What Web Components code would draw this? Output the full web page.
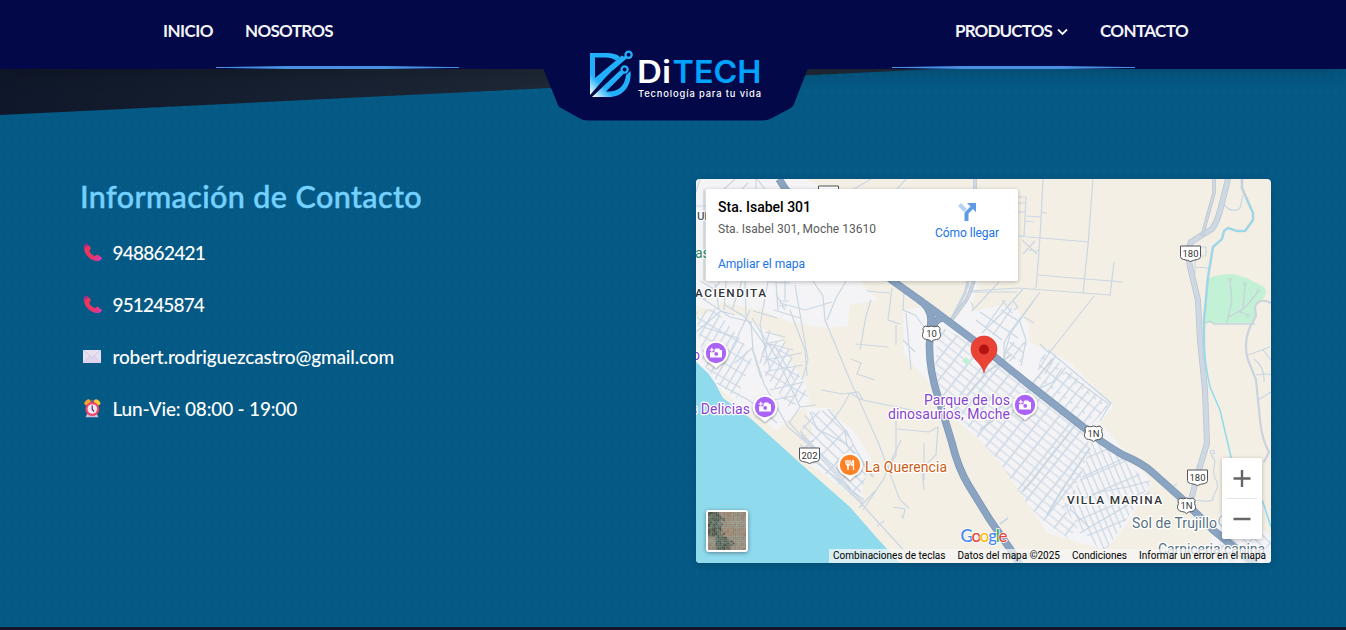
<!DOCTYPE html>
<html lang="es">
<head>
<meta charset="utf-8">
<title>DiTech</title>
<style>
html,body{margin:0;height:630px;overflow:hidden;background:#0f172a}
</style>
</head>
<body>
<ditech-page></ditech-page>
<script>
const define = (name, html, ready) => customElements.define(name, class extends HTMLElement {
  constructor(){ super(); this.attachShadow({mode:'open'}).innerHTML = html; }
  connectedCallback(){ if (ready) ready(this, this.shadowRoot); }
});

/* Text that spreads its tracking evenly to fill the width given in "w". */
define('fit-label', `<style>:host{display:block;white-space:nowrap;width:max-content}span{display:inline-block}</style><span><slot></slot></span>`,
(el, root) => {
  const s = root.querySelector('span'), n = el.textContent.length, w = +el.getAttribute('w');
  s.style.letterSpacing = '0';
  const d = (w - s.getBoundingClientRect().width) / n;
  s.style.letterSpacing = d + 'px';
});

define('nav-underline', `<style>
:host{display:block;width:243px;height:3px;background:
linear-gradient(#4a90e2,#4a90e2) 0 1px/100% 1px no-repeat,
linear-gradient(90deg,transparent 4%,#4a90e2 29%,#4a90e2 70%,transparent 96%)}
</style>`);

define('brand-logo', `<style>:host{display:block;width:265px;height:52px}svg{display:block;overflow:visible}</style>
<svg width="265" height="121" viewBox="543 0 265 121">
<defs><linearGradient id="g" x1="590" y1="97" x2="604" y2="83" gradientUnits="userSpaceOnUse"><stop offset=".1" stop-color="#fff"/><stop offset=".85" stop-color="#22b0fc"/></linearGradient></defs>
<path d="M543 68L558 105Q559 107 561 108L579 118Q583 120.500 588 120.500H762Q767 120.500 771 118.500L790 108.500Q793 107 794 104L808 68Z" fill="#030848"/>
<path d="M590 53H607C612 53 617 54 620 57L616 60.500C613 58.500 610 57.500 606 57.500H595V82L590 90Z" fill="url(#g)"/>
<path d="M590 95V84L595 78L622 55.500L625 57.500L605 78Z" fill="url(#g)"/>
<path d="M592 97L620 70.500L624.500 73L606 91.500H609C618 91.500 625 86 626 75L630.500 71C632 87 622 97 609 97Z" fill="url(#g)"/>
<path d="M612 69L626 57" stroke="#22b0fc" stroke-width="3"/>
<path d="M612 74L622 66" stroke="#030848" stroke-width="1.300"/>
<circle cx="628.600" cy="54.800" r="3.100" fill="#030848" stroke="#22b0fc" stroke-width="2.200"/>
<circle cx="624.600" cy="69.500" r="3.100" fill="#030848" stroke="#22b0fc" stroke-width="2.200"/>
<g fill="#fff"><text x="637" y="82.500" font-family="Inter,sans-serif" font-size="31" font-weight="600" textLength="34" lengthAdjust="spacingAndGlyphs">Di</text><text x="672.500" y="82.500" font-family="Inter,sans-serif" font-size="31" font-weight="600" fill="#00a2ff" textLength="89" lengthAdjust="spacingAndGlyphs">TECH</text>
<text x="638" y="97" font-family="Inter,sans-serif" font-size="9.300" font-weight="500" textLength="123">Tecnología para tu vida</text></g>
</svg>`);

define('site-header', `<style>
:host{display:block;position:relative;z-index:2;height:69px;background:#030848;box-shadow:0 8px 15px -3px rgba(0,0,0,.17);color:#f3f4f8;font:700 17px/24px Lato,sans-serif}
.bar{display:grid;grid-template-columns:543px 265px 1fr;height:69px}
.side{display:grid;grid-template-rows:66px 3px}
nav{display:flex;padding:19px 0 0 163px;gap:32px}
.r nav{padding-left:147px}
.drop{display:flex;gap:5px;align-items:center;height:24px}
svg{margin-top:2px}
nav-underline{margin-left:216px}.r nav-underline{margin-left:84px}
</style>
<div class="bar">
<div class="side"><nav><fit-label w="50">INICIO</fit-label><fit-label w="88">NOSOTROS</fit-label></nav><nav-underline></nav-underline></div>
<brand-logo></brand-logo>
<div class="side r"><nav><span class="drop"><fit-label w="97">PRODUCTOS</fit-label><svg width="11" height="8" viewBox="0 0 11 8"><path d="M1 1.500L5.500 6L10 1.500" fill="none" stroke="#f3f4f8" stroke-width="1.800"/></svg></span><fit-label w="88">CONTACTO</fit-label></nav><nav-underline></nav-underline></div>
</div>`);

const ICONS = {
phone:`<defs><linearGradient id="p" x2="1" y2="1"><stop stop-color="#9c2b88"/><stop offset=".25" stop-color="#f0365a"/><stop offset=".6" stop-color="#ec3466"/><stop offset="1" stop-color="#d03ab0"/></linearGradient></defs><path d="M1 2L4 0.500L8 5L6.300 8Q8 12 12 13L14.500 11.500L19 15Q18 18 15 18Q8 18 3.500 12Q0 7 1 2Z" fill="url(#p)"/><path d="M1 2L4 .5L5 1.500L2.500 4.500Z" fill="#9a2b86"/><path d="M14 12.500L19 15L17.500 17Z" fill="#db39b7"/>`,
mail:`<path d="M0 3H18V16H0Z" fill="#e8e1f2"/><path d="M0 16L7.500 9.500H10.500L18 16Z" fill="#e0d3ed"/><path d="M0 3.300L9 10.500L18 3.300M0 15.500L7 9M18 15.500L11 9" fill="none" stroke="#c6b8d8" stroke-width=".6"/>`,
clock:`<path d="M4 15L2.500 18.300H15.500L14 15Z" fill="#cabbdc"/><ellipse cx="4.500" cy="3.300" rx="3.500" ry="2.300" transform="rotate(-38 4.500 3.300)" fill="#f9a52c"/><ellipse cx="14.200" cy="3.300" rx="3.500" ry="2.300" transform="rotate(38 14.200 3.300)" fill="#ffcf33"/><path d="M8 1H11V4H8Z" fill="#7c5a87"/><circle cx="9.300" cy="10" r="7" fill="#f24464"/><circle cx="9.300" cy="10" r="4.800" fill="#f0e6f6"/><path d="M9.200 6.500V10.300L11 12.500" fill="none" stroke="#44314f" stroke-width="1.200"/>`};
define('contact-row', `<style>:host{display:flex;height:28px;margin-bottom:24px;align-items:center;font:500 19px/28px Lato,sans-serif;color:#fff}
i{display:block;width:19px;height:19px;margin:-2px 10.500px 0 3px}svg{display:block}</style><i></i><slot></slot>`,
(el, root) => root.querySelector('i').innerHTML = `<svg width="19" height="19" viewBox="0 0 19 19">${ICONS[el.getAttribute('icon')]}</svg>`);

define('contact-info', `<style>:host{display:block;width:575px}
h2{margin:-1px 0 25px;font:500 30.500px/36px Lato,sans-serif;color:#74d1ff;-webkit-text-stroke:.5px #74d1ff}</style>
<h2><fit-label w="342">Información de Contacto</fit-label></h2>
<contact-row icon="phone"><fit-label w="92.500">948862421</fit-label></contact-row>
<contact-row icon="phone"><fit-label w="91.500">951245874</fit-label></contact-row>
<contact-row icon="mail"><fit-label w="281.500">robert.rodriguezcastro@gmail.com</fit-label></contact-row>
<contact-row icon="clock"><fit-label w="184.500">Lun-Vie: 08:00 - 19:00</fit-label></contact-row>`);

const pinBody = `<path d="M0 -12.300A12.300 12.300 0 0 1 9 8.300Q4 11 0 15Q-4 11-9 8.300A12.300 12.300 0 0 1 0 -12.300Z" fill="#fff" filter="url(#sh)"/>`;
const cameraPin = (x, y) => `<g transform="translate(${x} ${y})">${pinBody}<circle r="10.200" fill="#aa62f7"/><path d="M-1.500-3L-.5-4.500H3.200L4.200-3H6V4.500H-6V-.8H-1.500Z" fill="#fff"/><circle cx=".2" cy=".9" r="1.900" fill="#aa62f7"/><path d="M-4.200-5.200V-1.200M-6.200-3.200H-2.200" stroke="#fff" stroke-width="1.200"/></g>`;
const shield = (x, y, t) => `<g transform="translate(${x} ${y})"><path d="M-10-7.500H10V3Q10 5.500 7 6Q3 6.500 0 8Q-3 6.500-7 6Q-10 5.500-10 3Z" fill="#fff" stroke="#505357"/><text y="3.500" text-anchor="middle" font-size="9.500" fill="#333">${t}</text></g>`;
const usShield = (x, y, t) => `<g transform="translate(${x} ${y})"><path d="M-6.500-7.500Q-3-6 0-7.500Q3-6 6.500-7.500L8.500-5Q7.500-2 9 1Q9.500 5 5 6Q2 6 0 8Q-2 6-5 6Q-9.500 5-9 1Q-7.500-2-8.500-5Z" fill="#fff" stroke="#505357"/><text y="3.500" text-anchor="middle" font-size="9.500" fill="#333">${t}</text></g>`;
const HIGHWAY = 'M779 179L786 190L840 240L893 281L932 309L980 345L1027 383L1083 427Q1102 443 1123 455Q1142 463 1152 472L1180 497L1213 530L1256 565M918 299Q931 307 931 320L929.500 345Q929 369 938 397L952 443Q958 468 969 486L990 520L1013 553L1020 565M944 318Q933 318 931 334';
const ROAD180 = 'M1228 179L1222 203Q1218 221 1212 229L1202 235L1191 242Q1187 250 1190 267L1198 300L1200 340L1205 390L1207 443L1198 473L1191 500';

define('city-map', `<style>:host{display:block}svg{display:block}
.road{fill:none;stroke:#cad7e3;stroke-width:1.200}.hw{fill:none;stroke:#7c98b8;stroke-width:7.500}.hi{fill:none;stroke:#8aa4c1;stroke-width:6}.w{fill:none;stroke:#b8c3cf;stroke-width:6}.wi{fill:none;stroke:#cdd8e3;stroke-width:4.600}
.lb{paint-order:stroke;stroke:#fff;stroke-width:2.500px;stroke-linejoin:round}</style>
<svg width="575" height="384" viewBox="696 179 575 384" font-family="Roboto,sans-serif">
<defs>
<filter id="sh" x="-30%" y="-30%" width="160%" height="170%"><feDropShadow dx="0" dy="1" stdDeviation="1" flood-opacity=".45"/></filter>
<pattern id="moche" width="14" height="26" patternUnits="userSpaceOnUse" patternTransform="translate(935 320) rotate(-52)"><path d="M0 1H14M0 14H14" stroke="#cbd7e3" stroke-width="1.700"/><path d="M1 0V26M8 0V26" stroke="#d0dbe6" stroke-width="1.200"/></pattern>
<pattern id="norte" width="18" height="8" patternUnits="userSpaceOnUse" patternTransform="translate(1048 350) rotate(-52)"><path d="M0 .6H18M.6 0V8M9 0V4" stroke="#cbd7e3" stroke-width="1.200"/></pattern>
<pattern id="sur" width="18" height="6" patternUnits="userSpaceOnUse" patternTransform="translate(1080 460) rotate(67)"><path d="M0 .6H18M.6 0V6" stroke="#ccd8e4" stroke-width="1.200"/></pattern>
<pattern id="coast" width="13" height="7" patternUnits="userSpaceOnUse" patternTransform="translate(700 320) rotate(-60)"><path d="M0 .6H13M.6 0V7" stroke="#cbd7e4" stroke-width="1.100"/></pattern>
<pattern id="quer" width="16" height="8" patternUnits="userSpaceOnUse" patternTransform="translate(810 420) rotate(44)"><path d="M0 .6H16M.6 0V8" stroke="#cbd7e4" stroke-width="1.200"/></pattern>
</defs>
<path d="M696 179H1271V563H696Z" fill="#f4efe4"/>
<g fill="#f4f3f5">
<path d="M696 179H805L815 184L835 189V281H860L878 300L850 305L848 326L825 328L790 322L760 310L740 306L722 302L712 310L696 306Z"/>
<path d="M696 318L720 308L745 318L783 340L790 360L805 380L810 403L790 418L777 430L752 415L723 392L696 362Z"/>
<path d="M805 407L830 408L840 420L853 430L872 460L863 480L862 503L798 455L813 433Z"/>
<path d="M903 310L925 306L952 322L962 312L974 281H980L970 312L1000 305L1016 308L1029 325V342L1048 350L1070 362L1113 407L1100 423L1127 453L1152 483L1130 520L1107 549L1097 548L1047 533L1000 463L980 440L950 415L935 390L925 378L904 355Z"/>
<path d="M1225 500L1271 536V563H1225L1210 540Z"/>
</g>
<path d="M696 362L708 373L715 383L723 398L750 418L800 463L850 507L877 538L900 563H696Z" fill="#90daee"/>
<path d="M1208 278Q1220 274 1233 274L1247 278L1264 287Q1268 293 1263 299Q1254 303 1255 309V317L1250 323H1204Z" fill="#c3f1d5"/>
<path d="M938 325L983 349L1027 386L1083 430L1090 445L1080 480L1060 505L1045 522L1030 508L1000 463L967 425L942 400L935 370Z" fill="url(#moche)"/>
<path d="M1045 522L1062 505L1078 528L1068 538Z" fill="url(#moche)"/>
<path d="M966 357L971 361L967 365L962 361Z" fill="#c3f1d5"/>
<path d="M1043 353L1062 364L1109 406L1088 428L1032 384Z" fill="url(#norte)"/>
<path d="M1005 342L1029 342L1020 362L1003 361Z" fill="url(#norte)"/>
<path d="M1093 436L1122 457L1145 480L1150 484L1107 549L1098 548L1062 507L1080 480Z" fill="url(#sur)"/>
<path d="M696 312L714 308L743 342L752 360L737 398L720 385L703 364Z" fill="url(#coast)"/>
<path d="M761 345L785 340L808 396L790 408L765 375Z" fill="url(#coast)"/>
<path d="M805 412L833 410L850 438L868 471L858 501L799 452Z" fill="url(#quer)"/>
<path d="M1228 503L1271 536V563H1215Z" fill="url(#quer)"/>
<g class="road">
<path d="M735 179L724 189M700 179L696 192M748 183L742 189M756 179V189M871 179L854 189M906 179L897 189M704 189V281M696 206H706"/>
<path d="M700 281L716 290M720 282L704 300M742 281L732 310M768 281L760 325L770 370M785 281V300M795 285L808 360L802 380M813 281L823 296L825 320L850 380L878 442L900 500L909 508M846 281L836 298L827 320M867 291L890 293M871 300L866 316L860 350M892 288L888 320L900 324M904 292L903 310L915 315L925 328M896 325V345M780 303L805 310L832 302M776 294L785 310M776 282L778 310M790 310L805 350L807 376M855 344L888 347M851 359L861 363L857 374L875 380M821 390L843 394L858 392L863 400L936 415M862 400L850 393L841 409L830 423M896 409V455L891 463M897 429L929 432L938 427L936 455L922 468L924 490M924 443V480M922 470H937M906 313L911 370M903 340L915 352"/>
<path d="M715 284L719 310M726 281L724 310M774 310L800 318M779 301H789M779 306H787M750 310L737 338L726 360M770 330L760 363M776 348L794 380M765 360L802 353M768 371L803 365M764 344L784 340M770 390L804 382M774 400L798 395"/>
<path d="M696 294L730 317L751 322L753 350L764 384L788 427L814 449M752 318L778 360L800 407M696 332L721 311L735 315M700 326L738 338M725 305L745 317L767 348M746 316L745 281M753 311L777 318M769 282L790 283M765 332L785 337M770 344L793 350M735 363L752 348L761 378M717 383L750 401L777 423M790 422L800 407L816 405"/>
<path d="M788 421L866 509L909 556M800 431L863 503M810 412L817 429L845 443L874 477M828 409L845 430L847 446M813 440L799 452M846 430L856 450L872 477M812 459L864 500M863 510L883 480L892 459L901 440M859 508L875 491M877 526L884 521M893 507L905 509L903 518L901 515"/>
<path d="M1043 179L1041 220L1039 252L1036 288M1093 179L1088 245L1083 293M1018 197H1026L1024 236H1018M1018 203H1025M1018 212H1025M1026 216L1041 217M1042 212L1047 213M1025 221L1034 222M1018 236L1041 238L1089 242M1022 240L1037 254M1035 241L1023 254M1028 250L1039 251M1038 275L1086 279L1123 282M1114 262L1110 296M970 291L1018 288L1110 295M968 281L970 292L1017 292M1094 296L1050 352L1038 370M1040 292L1010 334L1003 361M1023 289L1003 312L982 333M1001 310L1020 322L1026 340L1021 366M1013 301L1018 307L1014 310M1024 317L1034 323M1040 344L1049 353M972 311L999 282M1002 300L1012 313M971 302L974 309"/>
<path d="M1005 300L985 328M1012 308L993 335M980 312L1018 338M976 320L1002 340M1034 300L1010 332L1004 343V362"/>
<path d="M1048 350L1111 403L1100 421M1054 358L1030 386M1062 368L1053 382L1034 391M1056 355L1045 374M1065 372L1110 405"/>
<path d="M968 281L965 293L950 322" stroke-width="3"/>
<path d="M757 179L768 193M903 189L980 205"/>
<path d="M1224 205Q1233 214 1240 208L1243 195M1200 247H1206V256H1200M1195 256V274M1195 267L1208 268M1211 455C1220 463 1209 469 1216 480C1221 490 1211 494 1213 500C1206 503 1200 500 1195 500M1177 484Q1171 485 1171 495M1080 500L1100 492L1127 487L1150 481M1082 477L1127 457M1080 533L1150 492M1075 490L1070 509L1090 528M1220 544L1226 558L1240 550"/>
<circle cx="1212.500" cy="452" r="2"/>
<path d="M1248 355L1270 347M1254 359Q1265 367 1264 382M1263 350L1271 360M1256 375Q1268 373 1271 375M1258 400L1271 392"/>
<path d="M1271 303Q1259 297 1255 307L1256 316L1250 327Q1243 344 1248 360L1256 380L1260 420Q1262 440 1269 452L1264 462" stroke-width="2.200" stroke="#c9d3de"/>
<path d="M1000 524L1008 518M980 430L1000 415L1029 390M950 416L987 372L1012 354M1090 448L1060 493L1047 515M1076 424L1030 483L1022 492" stroke-width="2"/>
</g>
<path d="M1204 324L1210 321L1214 324H1255M1230 281L1232 300L1227 323M1245 285L1243 309L1227 318M1258 292L1249 303L1240 312L1248 315" stroke="#c6d3da" stroke-width="1.300" fill="none"/>
<g fill="#c3f1d5" stroke="#c6d3da"><circle cx="1230" cy="280" r="1.500"/><circle cx="1245" cy="284" r="1.500"/><circle cx="1258" cy="291" r="1.500"/><circle cx="1248" cy="315.500" r="1.500"/></g>
<path class="w" d="${ROAD180}"/><path class="wi" d="${ROAD180}"/>
<path class="w" style="stroke-width:3.500" d="M975 179V189M974 281Q971 290 967 299L950 322M1214 179V193L1202 236"/>
<path class="wi" style="stroke-width:2" d="M975 179V189M974 281Q971 290 967 299L950 322M1214 179V193L1202 236"/>
<path d="M1242 179V188L1253 213V220L1245 231L1237 231L1228 228L1224 231L1222 239L1213 247L1208 277L1204 320V360" fill="none" stroke="#c3d0db" stroke-width="2.600" stroke-linejoin="round"/>
<path d="M1246 198L1253 213V220L1245 231L1237 231L1228 228L1224 231L1222 239L1213 247L1208 277L1204 320V345Q1205 365 1210 387L1220 410L1231 457L1244 480L1263 502L1271 527" fill="none" stroke="#8fdaef" stroke-width="1.500"/>
<path class="hw" d="${HIGHWAY}"/><path class="hi" d="${HIGHWAY}"/>
${usShield(931.500,333.500,'10')}${usShield(1093.500,433.500,'1N')}${usShield(1186.500,505.500,'1N')}
${shield(1190.500,253.500,'180')}${shield(1197.500,477.500,'180')}${shield(809.500,455.500,'202')}${shield(828.500,193.500,'')}
<g class="lb">
<text x="697" y="220" font-size="11.500" font-weight="500" fill="#4d5967">UF</text><text x="695" y="258" font-size="14" fill="#238568">as</text><text x="692" y="360" font-size="14" fill="#8a3fd1">o</text>
<text x="695" y="296.500" font-size="11.800" font-weight="500" fill="#303438" textLength="71">ACIENDITA</text>
<text x="690" y="414" font-size="14" fill="#8744cf" textLength="60">s Delicias</text>
<text x="924" y="405" font-size="14" fill="#8744cf" textLength="86">Parque de los</text>
<text x="888" y="419" font-size="14" fill="#8744cf" textLength="122">dinosaurios, Moche</text>
<text x="865" y="472" font-size="14" fill="#cd5b16" textLength="82">La Querencia</text>
<text x="1067" y="504" font-size="11.800" font-weight="500" fill="#303438" textLength="95">VILLA MARINA</text>
<text x="1132" y="528" font-size="14" fill="#567180" textLength="85">Sol de Trujillo</text>
<text x="1158" y="554" font-size="14" fill="#567180" textLength="107">Carniceria canina</text></g>
${cameraPin(716,353)}${cameraPin(765,407)}${cameraPin(1025,405)}
<g transform="translate(850 465)">${pinBody}<circle r="10.200" fill="#ff8126"/><path d="M-4-5V-1Q-2-.1-2 5M0-5V-1Q-2 .5-2 5M-2-5V5M3.500-5V5M3.500-5Q1.500-3 1.500 0H3.500" fill="none" stroke="#fff" stroke-width="1.300"/></g>
<circle cx="1225" cy="521" r="6" fill="#fff" stroke="#9daab2"/>
<path d="M984 373C982 362 971 360 971 349A13 13 0 0 1 997 349C997 360 986 362 984 373Z" fill="#ea4335" stroke="#d33429" stroke-width=".7"/><circle cx="984" cy="349.500" r="5" fill="#b31412"/>
<text x="960.500" y="541.500" font-family="Lato,sans-serif" font-size="17" font-weight="500" paint-order="stroke" stroke="#fff" stroke-width="1.500" textLength="47"><tspan fill="#4285f4">G</tspan><tspan fill="#ea4335">o</tspan><tspan fill="#fbbc04">o</tspan><tspan fill="#4285f4">g</tspan><tspan fill="#34a853">l</tspan><tspan fill="#ea4335">e</tspan></text>
</svg>`);

define('place-card', `<style>:host{display:flex;box-sizing:border-box;width:312px;height:92px;padding:10px 19px 0 12px;justify-content:space-between;background:#fff;border-radius:2px;box-shadow:0 1px 4px rgba(0,0,0,.25);font:12px/16px Roboto,sans-serif;color:#5b5b5b}
b{display:block;font:500 14px/16px Roboto;color:#000;margin-bottom:6px}a{color:#1a73e8}.m{display:block;margin-top:19px}.d{text-align:center;display:flex;flex-direction:column;align-items:center;padding-top:4px}svg{display:block;margin-bottom:4px}</style>
<div><b><fit-label w="93">Sta. Isabel 301</fit-label></b><fit-label w="158">Sta. Isabel 301, Moche 13610</fit-label><a class="m"><fit-label w="87">Ampliar el mapa</fit-label></a></div>
<a class="d"><svg width="18" height="18" viewBox="0 0 18 18"><path d="M0 3L3 0L9 6L6 9Z" fill="#b5d3f8"/><path d="M6.500 18V9.500L12.500 3.500L9 0H18V9L15 6L10.500 10.500V18Z" fill="#5e9be7"/></svg><fit-label w="64">Cómo llegar</fit-label></a>`);

define('zoom-control', `<style>:host{display:block;width:40px;height:81px;background:#fff;border-radius:2px;box-shadow:0 1px 4px rgba(0,0,0,.25)}</style>
<svg width="40" height="81"><path d="M11.500 20.500H28.500M20 12V29M11.500 61H28.500" stroke="#666" stroke-width="2.400"/><path d="M5 40.500H35" stroke="#e6e6e6"/></svg>`);

/* Aerial thumbnail: speckled vegetation on the left, dusty terrain on the right. */
define('satellite-toggle', `<style>:host{display:block;box-sizing:border-box;width:42px;height:42px;border:2px solid #fff;border-radius:3px;overflow:hidden;box-shadow:0 1px 4px rgba(0,0,0,.4)}svg{display:block}</style>
<svg width="38" height="38" viewBox="0 0 38 38"></svg>`, (el, root) => {
  let seed = 11, cells = '';
  const rnd = () => (seed = (seed * 16807) % 2147483647) / 2147483647;
  for (let y = 0; y < 38; y += 1.9) for (let x = 0; x < 38; x += 1.9) {
    const edge = 11 + y * .38 + Math.sin(y / 4) * 3;
    const green = x < edge - rnd() * 5 && !(y > 24 && x < 6);
    const n = (rnd() - .5) * (green ? 52 : 18), b = green ? [98, 99, 84] : [156, 137, 117];
    cells += `<path d="M${x.toFixed(1)} ${y.toFixed(1)}h2v2h-2z" fill="rgb(${b.map(v => Math.round(v + n)).join()})"/>`;
  }
  root.querySelector('svg').innerHTML = cells + '<path d="M21 10L37 25M18 24L35 8" stroke="#b6a18b" stroke-width=".8" opacity=".5"/>';
});

define('map-credits', `<style>:host{display:flex;width:442px;height:14px;background:rgba(245,245,245,.72);font:10px/14px Roboto,sans-serif;color:#000;gap:12px;box-sizing:border-box;padding-left:4px}</style>
<fit-label w="112.500">Combinaciones de teclas</fit-label><fit-label w="102.500">Datos del mapa ©2025</fit-label><fit-label w="55">Condiciones</fit-label><fit-label w="127">Informar un error en el mapa</fit-label>`);

define('map-frame', `<style>:host{display:block;position:relative;width:575px;height:384px;border-radius:4px;overflow:hidden}
place-card,zoom-control,satellite-toggle,map-credits{position:absolute}
place-card{left:10px;top:10px}zoom-control{right:9px;bottom:24px}satellite-toggle{left:10px;bottom:11px}map-credits{right:0;bottom:0}</style>
<city-map></city-map><place-card></place-card><zoom-control></zoom-control><satellite-toggle></satellite-toggle><map-credits></map-credits>`);

define('contact-section', `<style>
:host{display:block;height:558px;background:linear-gradient(90deg,#0f172a,#1f2937 600px)}
.in{box-sizing:border-box;height:100%;padding:110px 75px 0 80px;display:flex;justify-content:space-between;
clip-path:polygon(0 46px,935px 0,100% 0,100% 100%,0 100%);
background:radial-gradient(circle at 8px 6px,#07648f 0 .8px,transparent 1.400px) 0 0/16px 16px,#055985}
.shade{box-shadow:0 2px 7px rgba(0,0,0,.16);height:384px;border-radius:4px}
</style><div class="in"><contact-info></contact-info><div class="shade"><map-frame></map-frame></div></div>`);

define('ditech-page', `<style>:host{display:block;width:1346px;height:630px;overflow:hidden;background:linear-gradient(#16182a,#10142a) 0 100%/100% 3px no-repeat}</style>
<site-header></site-header><contact-section></contact-section>`);
</script>
</body>
</html>
